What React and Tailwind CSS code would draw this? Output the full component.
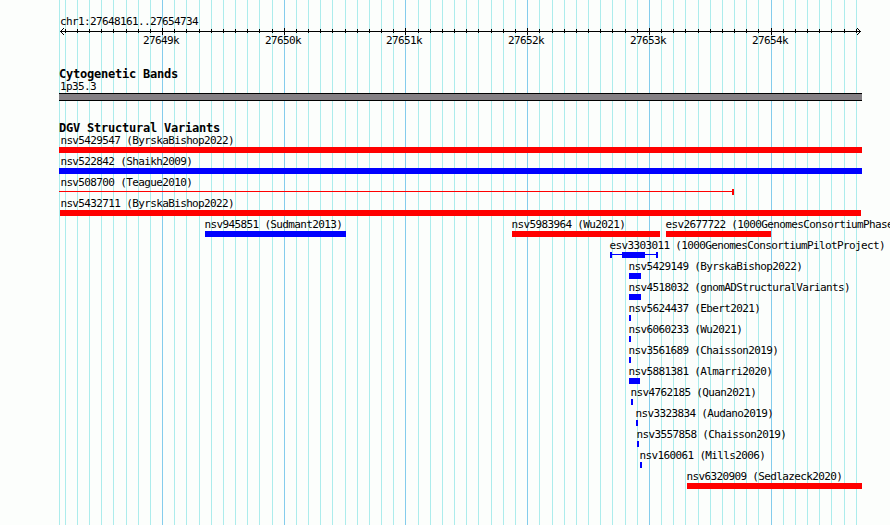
const WIDTH = 890;
const HEIGHT = 525;

const RED = "#ff0000";
const BLUE = "#0000ff";

const MAJOR = [
  { x: 162, label: "27649k" },
  { x: 284, label: "27650k" },
  { x: 405, label: "27651k" },
  { x: 527, label: "27652k" },
  { x: 649, label: "27653k" },
  { x: 771, label: "27654k" },
];

const MINOR = [
  65, 77, 89, 101, 113, 126, 138, 150,
  174, 186, 199, 211, 223, 235, 247, 259, 272,
  296, 308, 320, 332, 345, 357, 369, 381, 393,
  418, 430, 442, 454, 466, 478, 491, 503, 515,
  539, 552, 564, 576, 588, 600, 612, 625, 637,
  661, 673, 685, 698, 710, 722, 734, 746, 758,
  783, 795, 807, 819, 831, 844, 856,
];

// one entry per row; start/end are pixel columns, end is exclusive
const ROWS = [
  [{ name: "nsv5429547 (ByrskaBishop2022)", start: 59, end: 862, color: RED, labelX: 60.4 }],
  [{ name: "nsv522842 (Shaikh2009)", start: 59, end: 862, color: BLUE, labelX: 60.4 }],
  [{ name: "nsv508700 (Teague2010)", start: 59, end: 734, color: RED, labelX: 60.4, kind: "line" }],
  [{ name: "nsv5432711 (ByrskaBishop2022)", start: 60, end: 861, color: RED, labelX: 60.4 }],
  [
    { name: "nsv945851 (Sudmant2013)", start: 205, end: 346, color: BLUE },
    { name: "nsv5983964 (Wu2021)", start: 512, end: 660, color: RED },
    { name: "esv2677722 (1000GenomesConsortiumPhase", start: 666, end: 771, color: RED },
  ],
  [{ name: "esv3303011 (1000GenomesConsortiumPilotProject)", start: 610, end: 658, color: BLUE, kind: "range", thick: [622, 645] }],
  [{ name: "nsv5429149 (ByrskaBishop2022)", start: 629, end: 641, color: BLUE }],
  [{ name: "nsv4518032 (gnomADStructuralVariants)", start: 629, end: 641, color: BLUE }],
  [{ name: "nsv5624437 (Ebert2021)", start: 629, end: 631, color: BLUE }],
  [{ name: "nsv6060233 (Wu2021)", start: 629, end: 631, color: BLUE }],
  [{ name: "nsv3561689 (Chaisson2019)", start: 629, end: 631, color: BLUE }],
  [{ name: "nsv5881381 (Almarri2020)", start: 629, end: 640, color: BLUE }],
  [{ name: "nsv4762185 (Quan2021)", start: 631, end: 633, color: BLUE }],
  [{ name: "nsv3323834 (Audano2019)", start: 636, end: 638, color: BLUE }],
  [{ name: "nsv3557858 (Chaisson2019)", start: 637, end: 639, color: BLUE }],
  [{ name: "nsv160061 (Mills2006)", start: 640, end: 642, color: BLUE }],
  [{ name: "nsv6320909 (Sedlazeck2020)", start: 687, end: 862, color: RED }],
];

function Gridlines() {
  return (
    <svg className="pointer-events-none absolute inset-0" width={WIDTH} height={HEIGHT} shapeRendering="crispEdges">
      <rect x={59} y={0} width={1} height={HEIGHT} fill="#acecec" />
      {MINOR.map((x) => (
        <rect key={x} x={x} y={0} width={1} height={HEIGHT} fill="#acecec" />
      ))}
      {MAJOR.map(({ x }) => (
        <rect key={x} x={x} y={0} width={1} height={HEIGHT} fill="#84ccec" />
      ))}
    </svg>
  );
}

function Ruler() {
  return (
    <svg className="block" width={WIDTH} height={7} viewBox="0 0 890 7" shapeRendering="crispEdges">
      <rect x={60} y={3} width={801} height={1} />
      {MINOR.map((x) => (
        <rect key={x} x={x} y={1} width={1} height={4} />
      ))}
      {MAJOR.map(({ x }) => (
        <rect key={x} x={x} y={0} width={1} height={7} />
      ))}
      {[1, 2, 3].map((d) => (
        <g key={d}>
          <rect x={60 + d} y={3 - d} width={1} height={1} />
          <rect x={60 + d} y={3 + d} width={1} height={1} />
          <rect x={860 - d} y={3 - d} width={1} height={1} />
          <rect x={860 - d} y={3 + d} width={1} height={1} />
        </g>
      ))}
    </svg>
  );
}

function Glyph({ start, end, color, kind, thick }) {
  const bg = { backgroundColor: color };

  if (kind === "line") {
    return (
      <div className="flex h-[6px] items-stretch" style={{ marginLeft: start, width: end - start }}>
        <div className="mt-[2px] h-px grow" style={bg} />
        <div className="w-[2px]" style={bg} />
      </div>
    );
  }

  if (kind === "range") {
    return (
      <div className="flex h-[6px] items-stretch" style={{ marginLeft: start, width: end - start }}>
        <div className="w-[2px]" style={bg} />
        <div className="mt-[2px] h-px" style={{ ...bg, width: thick[0] - start - 2 }} />
        <div style={{ ...bg, width: thick[1] - thick[0] }} />
        <div className="mt-[2px] h-px grow" style={bg} />
        <div className="w-[2px]" style={bg} />
      </div>
    );
  }

  return <div className="h-[6px]" style={{ ...bg, marginLeft: start, width: end - start }} />;
}

function Feature(props) {
  const { name, start, labelX = start - 0.5 } = props;
  return (
    <div className="col-start-1 row-start-1">
      <div className="tracking-[-0.635px]" style={{ paddingLeft: labelX }}>{name}</div>
      <Glyph {...props} />
    </div>
  );
}

function TrackTitle({ children }) {
  return (
    <h2 className="h-[13px] pl-[59px] text-[12px] leading-[13px] font-bold tracking-[-0.224px]">{children}</h2>
  );
}

export default function App() {
  return (
    <div className="relative h-[525px] w-[890px] overflow-hidden bg-[#fcfefc] font-['DejaVu_Sans_Mono',monospace] text-[11px] leading-[13px] tracking-[-0.622px] whitespace-nowrap text-black">
      <Gridlines />
      <div className="relative">
        <header className="h-[68px] pt-[15px]">
          <div className="h-[13px] pl-[60px]">chr1:27648161..27654734</div>
          <Ruler />
          <div className="-mt-px grid">
            {MAJOR.map(({ x, label }) => (
              <span key={label} className="col-start-1 row-start-1" style={{ paddingLeft: x - 19 }}>
                {label}
              </span>
            ))}
          </div>
        </header>

        <section className="h-[54px]">
          <TrackTitle>Cytogenetic Bands</TrackTitle>
          <div className="-mt-px h-[13px] pl-[60px]">1p35.3</div>
          <div className="ml-[59px] h-[8px] w-[803px] border-y border-black bg-[#848084]" />
        </section>

        <section>
          <TrackTitle>DGV Structural Variants</TrackTitle>
          <div className="-mt-px">
            {ROWS.map((row) => (
              <div key={row[0].name} className="grid h-[21px]">
                {row.map((f) => (
                  <Feature key={f.name} {...f} />
                ))}
              </div>
            ))}
          </div>
        </section>
      </div>
    </div>
  );
}
